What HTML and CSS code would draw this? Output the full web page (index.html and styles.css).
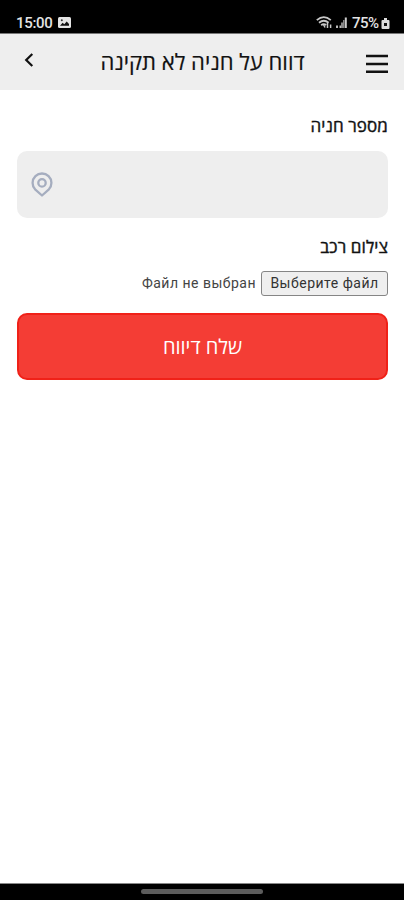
FILE: index.html
```
<!DOCTYPE html>
<html lang="he" dir="rtl">
<head>
<meta charset="utf-8">
<title>דווח על חניה לא תקינה</title>
<link rel="stylesheet" href="styles.css">
</head>
<body>
<div class="status" dir="ltr">
  <span class="clock">15:00</span>
  <svg class="photo" width="13" height="11" viewBox="0 0 13 11"><rect width="13" height="11" rx="1.5" fill="#e4e4e4"/><path d="M2 8.7 4.6 5.8 6.3 7.3 8.7 4.6 11 7v1.7z" fill="#111"/><circle cx="3.8" cy="3.3" r="1" fill="#333"/></svg>
  <svg class="wifi" width="17" height="13" viewBox="0 0 17 13" fill="none" stroke="#c8c8c8" stroke-width="1.8"><path d="M.8 4.2Q7.800-2 14.800 4.200M3 6.800q4.800-4 9.600 0M5.200 9.200q2.600-2.200 5 0"/><path d="M7.500 8.500 9 11.500M11.500 7v5M14.600 12V8.500" stroke-width="1.500"/></svg>
  <svg class="signal" width="11" height="11" viewBox="0 0 11 11"><path d="M0 8.500h2V11H0zM3.500 8.500h1.500V11H3.500z" fill="#bbb"/><path d="M5 5.500h2V11H5zM7 3h1.500v8H7z" fill="#888"/><path d="M8.800.5h2V11h-2z" fill="#ccc"/></svg>
  <span class="percent">75%</span>
  <svg class="battery" width="9" height="12" viewBox="0 0 9 12"><path d="M3 1h3v2h1.500q1 0 1 1v7q0 1-1 1h-6q-1 0-1-1V4q0-1 1-1H3z" fill="#ddd"/><path d="M3 6h3v3H3z" fill="#111"/></svg>
</div>
<header class="bar">
  <svg class="menu" width="22" height="20" viewBox="0 0 22 20" stroke="#111" stroke-width="2.5"><path d="M0 2h22M0 10h22M0 17.700h22"/></svg>
  <h1 class="title">דווח על חניה לא תקינה</h1>
  <svg class="back" width="10" height="14" viewBox="0 0 10 14" fill="none" stroke="#111" stroke-width="2.200"><path d="M8.300 1 2.200 7l6.100 6"/></svg>
</header>
<main class="form">
  <div class="label">מספר חניה</div>
  <div class="field">
    <svg width="22" height="25" viewBox="0 0 22 25" fill="none" stroke="#a5adbf" stroke-width="2.300" stroke-linejoin="round"><path d="M11 23.500 4.100 17.300A9.400 9.400 0 1 1 17.900 17.300z"/><circle cx="11" cy="10.900" r="3.700"/></svg>
  </div>
  <div class="label label-photo">צילום רכב</div>
  <div class="upload"><button class="choose" type="button">Выберите файл</button><span class="none">Файл не выбран</span></div>
  <button class="send" type="button">שלח דיווח</button>
</main>
<footer class="nav"><div class="handle"></div></footer>
</body>
</html>
```
FILE: styles.css
```
* { box-sizing: border-box; }
body {
  margin: 0;
  height: 900px;
  display: flex;
  flex-direction: column;
  background: #fff;
  color: #111;
  font-family: "Open Sans", "Noto Sans", sans-serif;
  overflow: hidden;
}
.status {
  height: 34px;
  flex: none;
  display: flex;
  align-items: center;
  padding: 12px 14px 0 16px;
  background: #000;
  border-bottom: 1px solid #777;
  color: #e4e4e4;
  font: 500 15px/20px Roboto, sans-serif;
}
.clock { width: 37px; white-space: nowrap; letter-spacing: -0.3px; }
.photo { margin-left: 5px; }
.wifi { margin-left: auto; }
.signal { margin-left: 3px; }
.percent { margin-left: 5px; width: 28px; letter-spacing: -0.5px; }
.battery { margin-left: 1px; }
.bar {
  height: 56px;
  flex: none;
  display: flex;
  align-items: center;
  justify-content: space-between;
  padding: 0 16px 0 24px;
  background: #eee;
}
.menu { margin-top: 4px; }
.back { margin-bottom: 4px; }
.title {
  margin: 0 0 2px 5px;
  font-size: 22px;
  line-height: 30px;
  font-weight: 400;
  white-space: nowrap;
  -webkit-text-stroke: 0.2px #111;
}
.form { flex: 1; padding: 25px 16px 0 17px; }
.label {
  font-size: 17px;
  line-height: 22px;
  letter-spacing: 0.1px;
  white-space: nowrap;
  -webkit-text-stroke: 0.4px #111;
}
.field {
  height: 67px;
  margin-top: 14px;
  padding-left: 14px;
  display: flex;
  align-items: center;
  justify-content: flex-end;
  border-radius: 10px;
  background: #eee;
}
.label-photo { margin-top: 18px; }
.upload {
  display: flex;
  align-items: center;
  height: 26px;
  margin-top: 12px;
  gap: 5px;
  color: #444;
  font: 14px/20px Roboto, sans-serif;
  letter-spacing: 0.5px;
}
.choose {
  width: 127px;
  height: 25px;
  padding: 0;
  border: 1px solid #858585;
  border-radius: 3px;
  background: #efefef;
  color: #333;
  font: inherit;
  letter-spacing: inherit;
  white-space: nowrap;
}
.none { white-space: nowrap; }
.send {
  display: block;
  width: 100%;
  height: 67px;
  margin-top: 17px;
  padding: 1px 0 0;
  border: 2px solid #f02118;
  border-radius: 10px;
  background: #f43d35;
  color: #fff;
  font: 400 20px/28px "Open Sans", sans-serif;
}
.nav {
  height: 17px;
  flex: none;
  background: #000;
  border-top: 1px solid #888;
  display: flex;
  justify-content: center;
}
.handle { width: 122px; height: 5px; margin-top: 5px; border-radius: 3px; background: #5c5c5c; }
```
